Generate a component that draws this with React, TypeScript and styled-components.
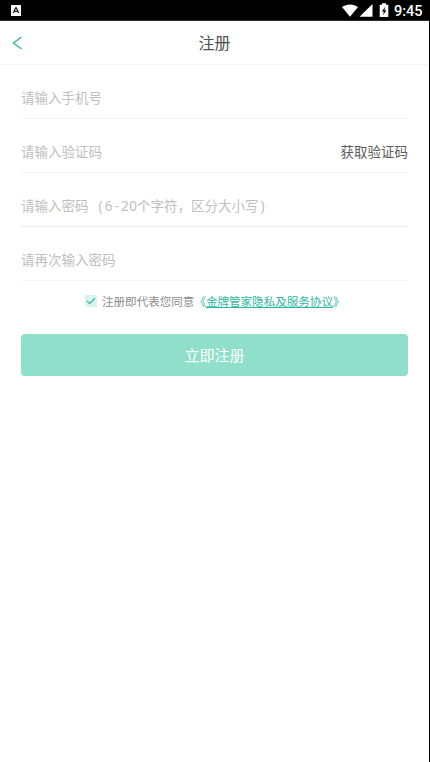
import React from "react";
import styled, { createGlobalStyle } from "styled-components";

const GlobalStyle = createGlobalStyle`
  * { box-sizing: border-box; }
  html, body { margin: 0; background: #000; }
  body { font-family: "Noto Sans CJK SC", sans-serif; }
`;

const Screen = styled.div`
  width: 430px;
  height: 762px;
  overflow: hidden;
  display: flex;
  flex-direction: column;
  background: #fff;
  border-right: 1px solid #000;
`;

const StatusBar = styled.div`
  height: 21px;
  flex: none;
  display: flex;
  align-items: center;
  justify-content: space-between;
  background: #000;
  border-bottom: 1px solid #2c2a2b;
  padding: 0 6px 0 11px;
`;

const StatusIcons = styled.div`
  display: flex;
  align-items: center;
  height: 20px;
`;

const Clock = styled.span`
  width: 29px;
  margin-left: 5px;
  font: 500 14.5px/20px Roboto, sans-serif;
  color: #fff;
  white-space: nowrap;
  padding-top: 4px;
`;

const Header = styled.header`
  height: 44px;
  flex: none;
  display: grid;
  grid-template-columns: 44px 1fr 44px;
  align-items: center;
  border-bottom: 1px solid #f5f5f5;
`;

const BackButton = styled.button`
  height: 43px;
  padding: 0 0 0 12px;
  border: 0;
  background: none;
  display: flex;
  align-items: center;
`;

const Title = styled.h1`
  margin: 0;
  padding-bottom: 2px;
  font-size: 16px;
  line-height: 24px;
  font-weight: 400;
  text-align: center;
  color: #505050;
`;

const Form = styled.main`
  display: flex;
  flex-direction: column;
  padding: 0 21px;
`;

const Field = styled.div<{ $strong?: boolean }>`
  height: 54px;
  display: flex;
  align-items: flex-end;
  justify-content: space-between;
  padding-bottom: 11px;
  border-bottom: 1px solid ${(p) => (p.$strong ? "#eeeeee" : "#f5f5f5")};
  font-size: 13.5px;
  line-height: 20px;
  white-space: nowrap;
`;

const Placeholder = styled.span`
  color: #c0c0c0;
`;

const Cell = styled.span`
  display: inline-block;
  width: 8.1px;
  text-align: center;
  font-family: "Noto Sans", sans-serif;
  line-height: 16px;
`;

const CodeButton = styled.button`
  border: 0;
  padding: 0;
  background: none;
  font: inherit;
  color: #5c5c5c;
`;

const Agreement = styled.label`
  height: 20px;
  margin: 10px 0 0 64px;
  display: flex;
  align-items: center;
  font-size: 11.55px;
  line-height: 20px;
  color: #8c8c8c;
  white-space: nowrap;
`;

const AgreementText = styled.span`
  padding-bottom: 1px;
`;

const CheckBox = styled.span`
  width: 12px;
  height: 12px;
  margin-right: 5px;
  display: flex;
  background: #d9f3ed;
`;

const Policy = styled.span`
  color: #2fb8a0;
`;

const PolicyLink = styled.span`
  text-decoration: underline;
  text-decoration-thickness: 1px;
  text-underline-offset: 1px;
`;

const Submit = styled.button`
  height: 42px;
  margin-top: 23px;
  padding: 0;
  border: 0;
  border-radius: 4px;
  background: #90dfca;
  color: #fff;
  font: 400 15px/22px "Noto Sans CJK SC", sans-serif;
`;

const mono = (text: string) => Array.from(text).map((c, i) => <Cell key={i}>{c === " " ? "\u00a0" : c}</Cell>);

export default function App() {
  return (
    <>
      <GlobalStyle />
      <Screen>
        <StatusBar>
          <svg width="10" height="11" viewBox="0 0 10 11">
            <rect width="10" height="11" fill="#fff" />
            <path d="M2.4 8 4.6 3h.8l2.2 5M3.4 6.4h3.2" fill="none" stroke="#222" strokeWidth="1.3" />
          </svg>
          <StatusIcons>
            <svg width="47" height="20" viewBox="0 0 47 20">
              <path d="M0 7C4.700 3.500 11.300 3.500 16 7L8 16.800Z" fill="#fff" />
              <path d="M30.500 4v12.700H17.500Z" fill="#fff" />
              <path d="M40 3.300h4v1.500h2.300V17h-8.600V4.800H40Z" fill="#fff" />
              <path d="M43.300 6.500 39.900 11.500h2l-.9 3.800 3.400-5.100h-2Z" fill="#000" />
            </svg>
            <Clock>9:45</Clock>
          </StatusIcons>
        </StatusBar>
        <Header>
          <BackButton aria-label="返回">
            <svg width="11" height="14" viewBox="0 0 11 14">
              <path d="M9.500 1 1.500 7l8 6" fill="none" stroke="#38b8a3" strokeWidth="1.5" />
            </svg>
          </BackButton>
          <Title>注册</Title>
        </Header>
        <Form>
          <Field><Placeholder>请输入手机号</Placeholder></Field>
          <Field>
            <Placeholder>请输入验证码</Placeholder>
            <CodeButton>获取验证码</CodeButton>
          </Field>
          <Field $strong><Placeholder>请输入密码{mono(" (6-20")}个字符，区分大小写{mono(")")}</Placeholder></Field>
          <Field><Placeholder>请再次输入密码</Placeholder></Field>
          <Agreement>
            <CheckBox>
              <svg width="12" height="12" viewBox="0 0 12 12">
                <path d="m2 6 2.700 2.600L10 3.300" fill="none" stroke="#45bda8" strokeWidth="1.400" />
              </svg>
            </CheckBox>
            <AgreementText>
              注册即代表您同意<Policy>《<PolicyLink>金牌管家隐私及服务协议</PolicyLink>》</Policy>
            </AgreementText>
          </Agreement>
          <Submit>立即注册</Submit>
        </Form>
      </Screen>
    </>
  );
}
